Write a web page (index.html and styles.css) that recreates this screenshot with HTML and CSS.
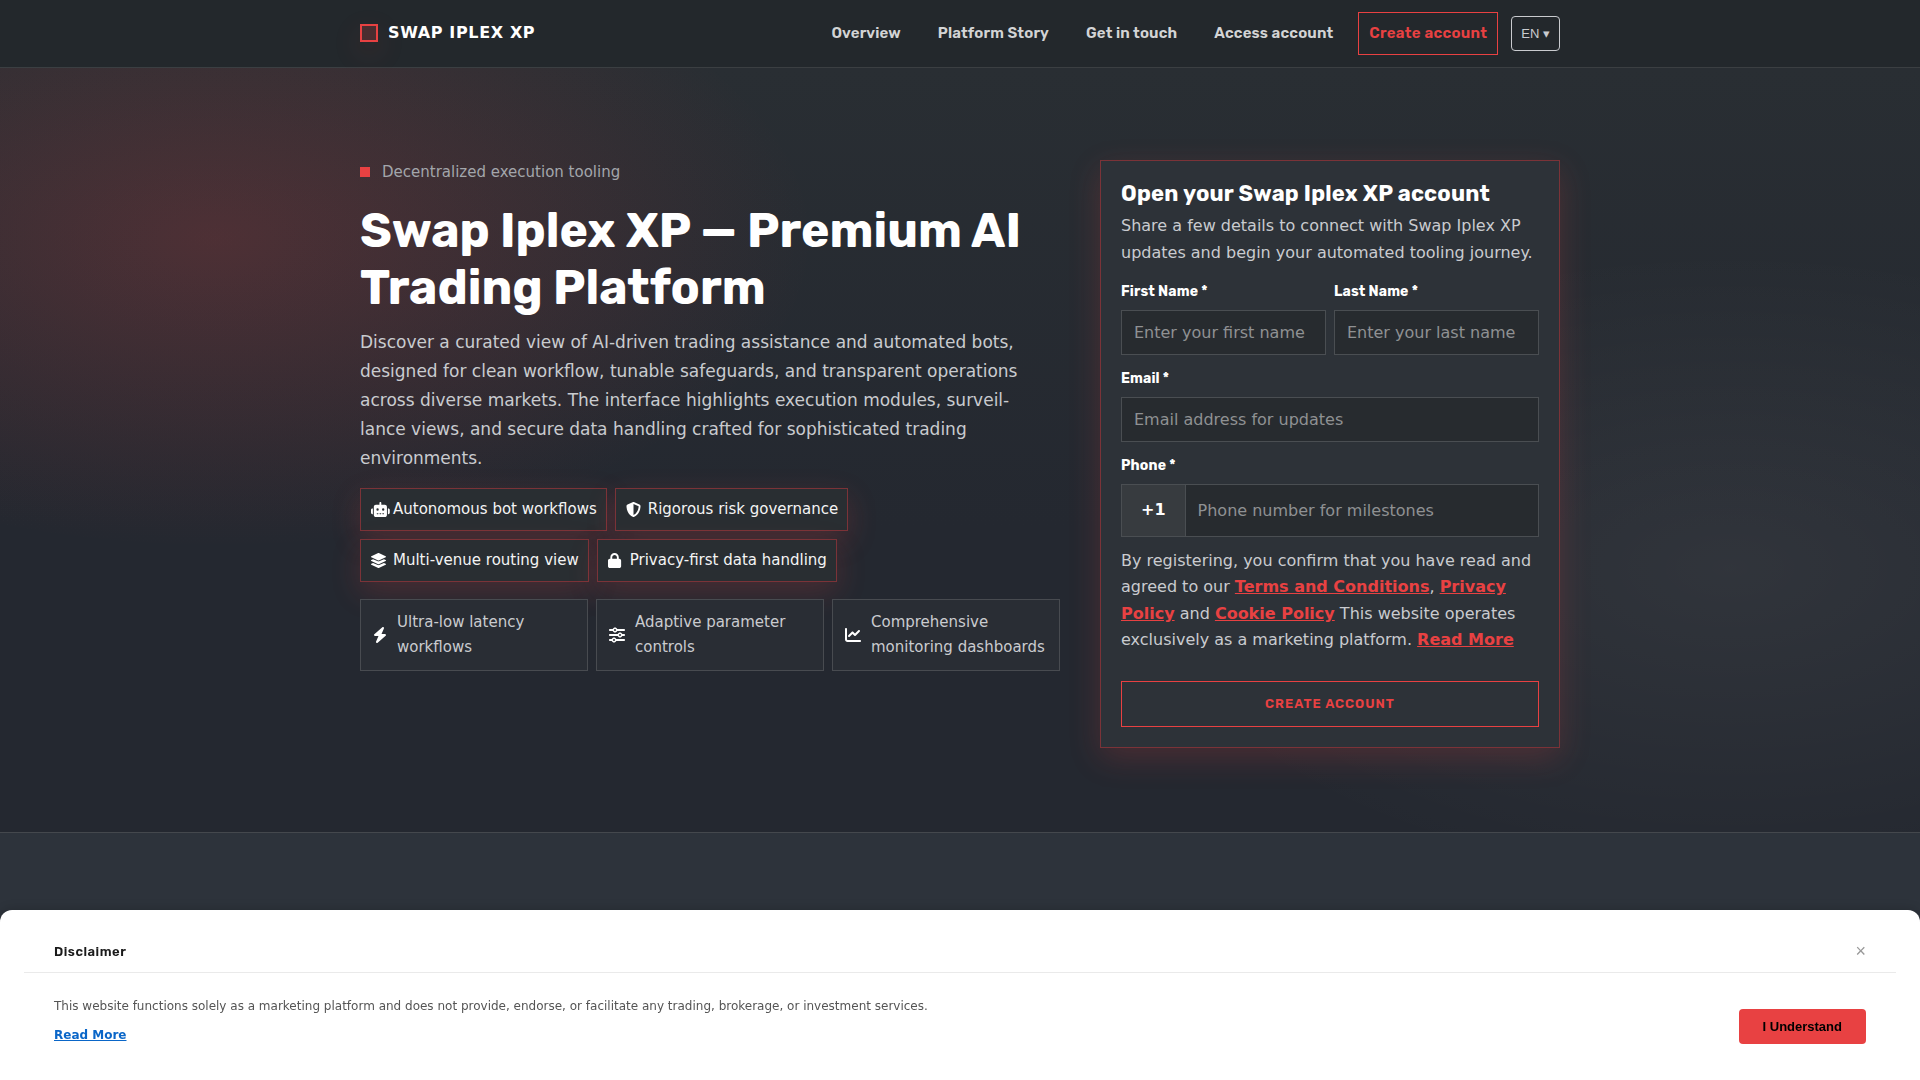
FILE: index.html
```html
<!DOCTYPE html>
<html lang="en">
<head>
    <meta charset="UTF-8">
    <meta name="viewport" content="width=device-width, initial-scale=1.0">
    <title>Swap Iplex XP</title>
    <link rel="stylesheet" href="styles.css">
</head>
<body>
    <header class="site-header">
        <div class="container header-inner">
            <a href="#" class="brand">
                <span class="brand-mark"></span>
                <span>SWAP IPLEX XP</span>
            </a>
            <nav class="nav">
                <a href="#overview" class="nav-link">Overview</a>
                <a href="#story" class="nav-link">Platform Story</a>
                <a href="#contact" class="nav-link">Get in touch</a>
                <a href="#login" class="nav-link">Access account</a>
                <a href="#signup" class="nav-cta">Create account</a>
                <button type="button" class="lang">EN ▾</button>
            </nav>
        </div>
    </header>

    <main>
        <section class="hero" id="overview">
            <div class="container hero-grid">
                <div class="hero-copy">
                    <div class="eyebrow"><span class="dot"></span>Decentralized execution tooling</div>
                    <h1>Swap Iplex XP — Premium AI Trading Platform</h1>
                    <p class="lead">Discover a curated view of AI-driven trading assistance and automated bots, designed for clean workflow, tunable safeguards, and transparent operations across diverse markets. The interface highlights execution modules, surveil&shy;lance views, and secure data handling crafted for sophisticated trading environments.</p>

                    <div class="chips">
                        <span class="chip">
                            <svg class="icon" viewBox="0 0 640 512" preserveAspectRatio="xMinYMid slice"><path d="M320 0c17.700 0 32 14.300 32 32v64h120c39.800 0 72 32.200 72 72v272c0 39.800-32.200 72-72 72H168c-39.800 0-72-32.200-72-72V168c0-39.800 32.200-72 72-72h120V32c0-17.700 14.300-32 32-32zM208 384c-8.800 0-16 7.200-16 16s7.200 16 16 16h32c8.800 0 16-7.200 16-16s-7.200-16-16-16h-32zm96 0c-8.800 0-16 7.200-16 16s7.200 16 16 16h32c8.800 0 16-7.200 16-16s-7.200-16-16-16h-32zm96 0c-8.800 0-16 7.200-16 16s7.200 16 16 16h32c8.800 0 16-7.200 16-16s-7.200-16-16-16h-32zM264 256a40 40 0 1 0-80 0 40 40 0 1 0 80 0zm152 40a40 40 0 1 0 0-80 40 40 0 1 0 0 80zM48 224h16v192H48c-26.500 0-48-21.500-48-48v-96c0-26.500 21.500-48 48-48zm544 0c26.500 0 48 21.500 48 48v96c0 26.500-21.500 48-48 48h-16V224h16z"/></svg>
                            Autonomous bot workflows
                        </span>
                        <span class="chip">
                            <svg class="icon" viewBox="0 0 512 512"><path d="M256 0c4.600 0 9.200 1 13.400 2.900l188.300 79.900c22 9.300 38.400 31 38.300 57.200-.5 99.200-41.300 280.700-213.600 363.200-16.700 8-36.100 8-52.800 0C57.300 420.700 16.500 239.200 16 140c-.1-26.200 16.300-47.900 38.300-57.200L242.700 2.900C246.800 1 251.400 0 256 0zm0 66.800v378.100C394 378 431.100 230.100 432 141.400L256 66.800z"/></svg>
                            Rigorous risk governance
                        </span>
                        <span class="chip">
                            <svg class="icon" viewBox="0 0 512 512"><path d="M12.400 148l232.900 105.700c6.800 3.100 14.500 3.100 21.300 0L499.600 148c16.500-7.500 16.500-32.500 0-40L266.600 2.300c-6.800-3.100-14.500-3.100-21.300 0L12.400 108c-16.500 7.500-16.500 32.500 0 40zm487.200 88.300l-58.100-26.300-161.600 73.300c-7.600 3.400-15.600 5.200-23.900 5.200s-16.300-1.700-23.900-5.200L70.500 210l-58.100 26.300c-16.500 7.500-16.500 32.500 0 40l232.900 105.600c6.800 3.100 14.500 3.100 21.300 0L499.600 276.300c16.500-7.500 16.500-32.500 0-40zm0 127.800l-57.900-26.200-161.900 73.400c-7.600 3.400-15.600 5.200-23.900 5.200s-16.300-1.700-23.900-5.200L70.300 337.900l-57.900 26.200c-16.500 7.500-16.500 32.500 0 40l232.900 105.600c6.800 3.100 14.500 3.100 21.300 0L499.600 404.100c16.500-7.500 16.500-32.500 0-40z"/></svg>
                            Multi-venue routing view
                        </span>
                        <span class="chip">
                            <svg class="icon" viewBox="0 0 448 512" preserveAspectRatio="xMinYMid meet"><path d="M144 144v48h160v-48c0-44.200-35.800-80-80-80s-80 35.800-80 80zm-64 48v-48C80 64.500 144.500 0 224 0s144 64.500 144 144v48h16c35.300 0 64 28.700 64 64v192c0 35.300-28.700 64-64 64H64c-35.300 0-64-28.700-64-64V256c0-35.300 28.700-64 64-64h16z"/></svg>
                            Privacy-first data handling
                        </span>
                    </div>

                    <ul class="features">
                        <li>
                            <svg class="icon" viewBox="0 0 448 512"><path d="M349.400 44.600c5.900-13.700 1.500-29.700-10.600-38.500s-28.600-8-39.900 1.800l-256 224c-10 8.800-13.600 22.900-8.900 35.300S50.700 288 64 288h111.500L98.600 467.400c-5.900 13.700-1.500 29.700 10.600 38.500s28.600 8 39.900-1.800l256-224c10-8.800 13.600-22.900 8.900-35.300s-16.600-20.700-30-20.700H272.500l76.900-179.500z"/></svg>
                            <span>Ultra-low latency workflows</span>
                        </li>
                        <li>
                            <svg class="icon" viewBox="0 0 512 512"><path d="M0 416c0 17.700 14.300 32 32 32h54.700c12.300 28.300 40.500 48 73.300 48s61-19.700 73.300-48H480c17.700 0 32-14.300 32-32s-14.300-32-32-32H233.300c-12.300-28.300-40.500-48-73.300-48s-61 19.700-73.300 48H32c-17.700 0-32 14.300-32 32zm128 0a32 32 0 1 1 64 0 32 32 0 1 1-64 0zm192-160a32 32 0 1 1 64 0 32 32 0 1 1-64 0zm32-80c-32.800 0-61 19.700-73.300 48H32c-17.700 0-32 14.300-32 32s14.300 32 32 32h246.700c12.300 28.300 40.500 48 73.300 48s61-19.700 73.300-48H480c17.700 0 32-14.300 32-32s-14.300-32-32-32h-54.700c-12.300-28.300-40.500-48-73.300-48zM192 128a32 32 0 1 1 0-64 32 32 0 1 1 0 64zm73.300-64C253 35.700 224.800 16 192 16s-61 19.700-73.300 48H32C14.300 64 0 78.300 0 96s14.300 32 32 32h86.700c12.300 28.300 40.500 48 73.300 48s61-19.700 73.300-48H480c17.700 0 32-14.300 32-32s-14.300-32-32-32H265.300z"/></svg>
                            <span>Adaptive parameter controls</span>
                        </li>
                        <li>
                            <svg class="icon" viewBox="0 0 512 512"><path d="M64 64c0-17.700-14.300-32-32-32S0 46.300 0 64v336c0 44.200 35.800 80 80 80h400c17.700 0 32-14.300 32-32s-14.300-32-32-32H80c-8.800 0-16-7.200-16-16V64zm406.600 86.600c12.500-12.500 12.500-32.800 0-45.300s-32.800-12.500-45.300 0L320 210.700l-57.400-57.300c-12.500-12.500-32.800-12.500-45.300 0l-112 112c-12.500 12.500-12.500 32.800 0 45.300s32.800 12.500 45.300 0L240 221.300l57.400 57.300c12.500 12.500 32.800 12.500 45.300 0l128-128z"/></svg>
                            <span>Comprehensive monitoring dashboards</span>
                        </li>
                    </ul>
                </div>

                <form class="signup" id="signup">
                    <h2>Open your Swap Iplex XP account</h2>
                    <p class="signup-intro">Share a few details to connect with Swap Iplex XP updates and begin your automated tooling journey.</p>
                    <div class="fields">
                        <div class="field">
                            <label for="first-name">First Name *</label>
                            <input type="text" id="first-name" placeholder="Enter your first name">
                        </div>
                        <div class="field">
                            <label for="last-name">Last Name *</label>
                            <input type="text" id="last-name" placeholder="Enter your last name">
                        </div>
                        <div class="field wide">
                            <label for="email">Email *</label>
                            <input type="email" id="email" placeholder="Email address for updates">
                        </div>
                        <div class="field wide">
                            <label for="phone">Phone *</label>
                            <div class="phone">
                                <span class="prefix">+1</span>
                                <input type="tel" id="phone" placeholder="Phone number for milestones">
                            </div>
                        </div>
                    </div>
                    <p class="consent">By registering, you confirm that you have read and agreed to our <a href="#terms">Terms and Conditions</a>, <a href="#privacy">Privacy Policy</a> and <a href="#cookies">Cookie Policy</a> This website operates exclusively as a marketing platform. <a href="#more">Read More</a></p>
                    <button type="submit" class="submit">CREATE ACCOUNT</button>
                </form>
            </div>
        </section>
        <section class="next-section" id="story"></section>
    </main>

    <aside class="disclaimer" id="disclaimer">
        <div class="disclaimer-head">
            <h3>Disclaimer</h3>
            <button type="button" class="close" aria-label="Close">×</button>
        </div>
        <div class="disclaimer-body">
            <div>
                <p>This website functions solely as a marketing platform and does not provide, endorse, or facilitate any trading, brokerage, or investment services.</p>
                <a href="#more">Read More</a>
            </div>
            <button type="button" class="accept">I Understand</button>
        </div>
    </aside>
</body>
</html>
```
FILE: styles.css
```css
* {
    box-sizing: border-box;
}

body {
    display: flex;
    flex-direction: column;
    margin: 0;
    background: #2d333b;
    color: #c9cbcf;
    font-family: "DejaVu Sans", sans-serif;
    font-size: 16px;
    line-height: 1.65;
    min-height: 100vh;
}

h1, h2, h3, p, ul {
    margin: 0;
    padding: 0;
}

h1, h2, h3, label, .nav-link, .nav-cta, .submit {
    font-family: Rubik, Inter, sans-serif;
}

.container {
    max-width: 1200px;
    margin: 0 auto;
}

/* Header */
.site-header {
    background: #23282c;
    border-bottom: 1px solid #3b3f42;
}

.header-inner {
    display: flex;
    align-items: center;
    justify-content: space-between;
    height: 67px;
}

.brand {
    display: flex;
    align-items: center;
    gap: 10px;
    color: #fff;
    font-weight: 700;
    letter-spacing: 0.04em;
    text-decoration: none;
}

.brand-mark {
    width: 18px;
    height: 18px;
    border: 2px solid #e84142;
    background: rgba(232, 65, 66, 0.2);
    box-shadow: 0 10px 30px rgba(232, 65, 66, 0.15);
}

.nav {
    display: flex;
    align-items: center;
    gap: 13px;
}

.nav-link {
    padding: 8px 12px;
    color: #d3d4d5;
    font-size: 15px;
    font-weight: 600;
    letter-spacing: 0.01em;
    text-decoration: none;
}

.nav-cta {
    padding: 8px 10px;
    border: 1px solid #e84142;
    color: #e84142;
    font-size: 15px;
    font-weight: 600;
    letter-spacing: 0.02em;
    text-decoration: none;
}

.lang {
    height: 35px;
    padding: 0 9px;
    border: 1px solid #c9cbcf;
    border-radius: 4px;
    background: transparent;
    color: #c9cbcf;
    font-family: "Liberation Sans", sans-serif;
    font-size: 13px;
}

main {
    display: flex;
    flex: 1;
    flex-direction: column;
}

/* Hero */
.hero {
    padding: 92px 0 84px;
    border-bottom: 1px solid #44484d;
    background:
        radial-gradient(ellipse 600px 310px at 215px 170px, rgba(232, 65, 66, 0.2), transparent),
        radial-gradient(ellipse 600px 320px at 1730px 500px, rgba(255, 255, 240, 0.06), transparent),
        linear-gradient(180deg, #292e33, #242830 60%);
}

.hero-grid {
    display: grid;
    grid-template-columns: 1fr 460px;
    gap: 40px;
    align-items: start;
}

.eyebrow {
    display: flex;
    align-items: center;
    gap: 12px;
    color: #a3a6ab;
    font-size: 15px;
}

.dot {
    width: 10px;
    height: 10px;
    background: #e84142;
}

h1 {
    margin-top: 17px;
    color: #fff;
    font-size: 48px;
    font-weight: 700;
    line-height: 57px;
}

.lead {
    margin-top: 12px;
    max-width: 664px;
    font-size: 17px;
    line-height: 29px;
}

.chips {
    display: flex;
    flex-wrap: wrap;
    gap: 8px;
    margin-top: 15px;
    max-width: 520px;
}

.chip {
    display: flex;
    align-items: center;
    gap: 7px;
    height: 43px;
    padding: 0 9px 0 10px;
    border: 1px solid #7b3338;
    background: #292e32;
    box-shadow: 0 10px 30px rgba(232, 65, 66, 0.2);
    color: #f4f4f4;
    font-size: 15px;
}

.icon {
    flex: none;
    fill: #fff;
}

/* the robot glyph is wider than its box */
.chip .icon {
    width: 15px;
    height: 15px;
    overflow: visible;
}

.features {
    display: grid;
    grid-template-columns: repeat(3, 1fr);
    gap: 8px;
    margin-top: 17px;
    list-style: none;
}

.features li {
    display: flex;
    align-items: center;
    gap: 10px;
    padding: 10px 12px;
    border: 1px solid #484b50;
    background: #292d34;
    font-size: 15px;
    line-height: 25px;
}

.features .icon {
    height: 16px;
}

/* Sign-up form */
.signup {
    padding: 20px;
    border: 1px solid #7b3338;
    background: #2d3238;
    box-shadow: 0 10px 30px rgba(232, 65, 66, 0.2);
}

h2 {
    color: #fff;
    font-size: 22px;
    font-weight: 700;
    letter-spacing: 0.01em;
    line-height: 26px;
}

.signup-intro {
    margin-top: 5px;
    line-height: 27px;
}

.fields {
    display: grid;
    grid-template-columns: 1fr 1fr;
    gap: 12px 8px;
    margin-top: 14px;
}

.field {
    display: flex;
    flex-direction: column;
    gap: 7px;
    min-width: 0;
}

.wide {
    grid-column: 1 / -1;
}

label {
    color: #fff;
    font-size: 14px;
    font-weight: 700;
    letter-spacing: 0.01em;
    line-height: 23px;
}

input {
    width: 100%;
    height: 45px;
    padding: 0 12px;
    border: 1px solid #4a4e52;
    background: #272b2f;
    color: #fff;
    font-family: inherit;
    font-size: 16px;
}

input::placeholder {
    color: #8f9193;
}

.phone {
    display: flex;
    height: 53px;
    border: 1px solid #4a4e52;
}

.phone input {
    height: 100%;
    border: 0;
}

.prefix {
    display: flex;
    align-items: center;
    padding: 0 19px;
    border-right: 1px solid #4a4e52;
    background: #373b3f;
    color: #fff;
    font-weight: 700;
}

.consent {
    margin-top: 11px;
}

.consent a {
    color: #e84142;
    font-weight: 700;
}

.submit {
    width: 100%;
    height: 46px;
    margin-top: 27px;
    border: 1px solid #e84142;
    background: transparent;
    color: #e84142;
    font-size: 13px;
    font-weight: 600;
    letter-spacing: 1px;
}

.next-section {
    flex: 1;
}

/* Disclaimer banner */
.disclaimer {
    position: fixed;
    right: 0;
    bottom: 0;
    left: 0;
    padding: 24px 24px 33px;
    border-radius: 12px 12px 0 0;
    background: #fff;
    box-shadow: 0 -2px 10px rgba(0, 0, 0, 0.15);
}

.disclaimer-head {
    display: flex;
    align-items: center;
    justify-content: space-between;
    padding: 7px 30px 10px;
    border-bottom: 1px solid #eaeaea;
}

h3 {
    color: #1a1a1a;
    font-size: 13px;
    font-weight: 600;
    letter-spacing: 0.04em;
}

.close {
    padding: 0;
    border: 0;
    background: none;
    color: #999;
    font-family: "Liberation Sans", sans-serif;
    font-size: 18px;
}

.disclaimer-body {
    display: flex;
    align-items: flex-end;
    justify-content: space-between;
    padding: 21px 30px 0;
    color: #555;
    font-size: 12px;
    line-height: 24px;
}

.disclaimer-body p {
    margin-bottom: 5px;
}

.disclaimer-body a {
    color: #0a66c8;
    font-weight: 700;
}

.accept {
    height: 35px;
    margin-bottom: 3px;
    padding: 0 24px;
    border: 0;
    border-radius: 4px;
    background: #e84142;
    color: #000;
    font-family: "Liberation Sans", sans-serif;
    font-size: 13px;
    font-weight: 700;
}
```
